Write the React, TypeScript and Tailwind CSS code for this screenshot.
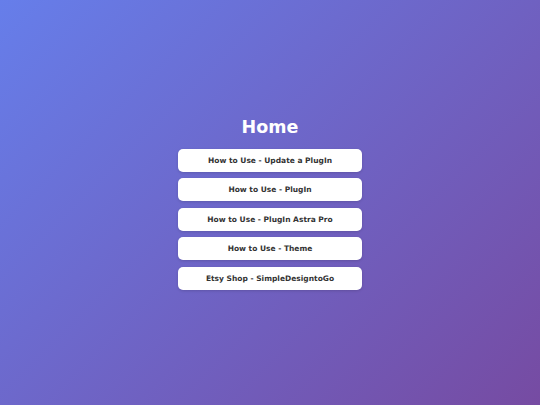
const links = [
  "How to Use - Update a PlugIn",
  "How to Use - PlugIn",
  "How to Use - PlugIn Astra Pro",
  "How to Use - Theme",
  "Etsy Shop - SimpleDesigntoGo",
];

export default function App() {
  return (
    <div
      className="min-h-screen flex flex-col items-center justify-center pt-[4px] bg-[linear-gradient(135deg,#667eea_0%,#764ba2_100%)] text-white"
      style={{ fontFamily: '"DejaVu Sans", sans-serif' }}
    >
      <h1 className="text-[17.5px] font-bold leading-none mb-[12px]">Home</h1>
      <div className="flex flex-col gap-[6.5px] w-[184px]">
        {links.map((label) => (
          <button
            key={label}
            type="button"
            className="h-[23px] w-full rounded-[5px] bg-white text-[#333] text-[7.5px] font-bold shadow-[0_1px_3px_rgba(0,0,0,0.15)]"
          >
            {label}
          </button>
        ))}
      </div>
    </div>
  );
}
